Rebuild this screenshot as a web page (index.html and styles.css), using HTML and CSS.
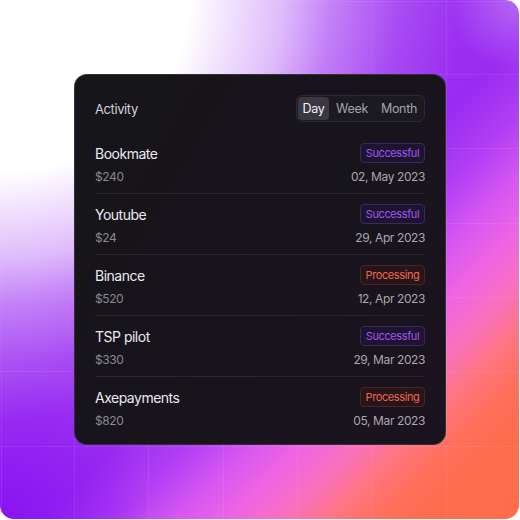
FILE: index.html
```html
<!DOCTYPE html>
<html>
<head>
<meta charset="utf-8">
<link rel="stylesheet" href="styles.css">
</head>
<body>
<div class="stage">
  <div class="grid"></div>
  <div class="card">
    <div class="header">
      <span class="title">Activity</span>
      <div class="seg">
        <span class="seg-item day active">Day</span>
        <span class="seg-item week">Week</span>
        <span class="seg-item month">Month</span>
      </div>
    </div>
    <div class="list">
      <div class="row">
        <div class="line1"><span class="name">Bookmate</span><span class="badge ok">Successful</span></div>
        <div class="line2"><span class="amount">$240</span><span class="date">02, May 2023</span></div>
      </div>
      <div class="row">
        <div class="line1"><span class="name">Youtube</span><span class="badge ok">Successful</span></div>
        <div class="line2"><span class="amount">$24</span><span class="date">29, Apr 2023</span></div>
      </div>
      <div class="row">
        <div class="line1"><span class="name">Binance</span><span class="badge proc">Processing</span></div>
        <div class="line2"><span class="amount">$520</span><span class="date">12, Apr 2023</span></div>
      </div>
      <div class="row">
        <div class="line1"><span class="name">TSP pilot</span><span class="badge ok">Successful</span></div>
        <div class="line2"><span class="amount">$330</span><span class="date">29, Mar 2023</span></div>
      </div>
      <div class="row last">
        <div class="line1"><span class="name">Axepayments</span><span class="badge proc">Processing</span></div>
        <div class="line2"><span class="amount">$820</span><span class="date">05, Mar 2023</span></div>
      </div>
    </div>
  </div>
</div>
</body>
</html>
```
FILE: styles.css
```css
* { box-sizing: border-box; }
html, body { margin: 0; padding: 0; background: #fff; }
body { font-family: Inter, "Noto Sans", sans-serif; }

.stage {
  position: relative;
  width: 519px;
  height: 519px;
  border-radius: 14px;
  overflow: hidden;
  padding: 74px 0 0 74px;
  background:
    radial-gradient(ellipse 460px 420px at 0% 0%, #ffffff 0%, #ffffff 41%, rgba(255,255,255,0.65) 61%, rgba(255,255,255,0.35) 72%, rgba(255,255,255,0.1) 87%, rgba(255,255,255,0) 100%),
    radial-gradient(circle at 100% 0%, rgba(205,150,250,0.55) 0%, rgba(205,150,250,0) 70px),
    radial-gradient(circle at 0% 100%, rgba(136,16,242,0.9) 0%, rgba(136,16,242,0) 150px),
    linear-gradient(135deg,
      #a848f4 0%, #a440f3 30%, #9c32f1 45%, #9a2cf1 54%, #b03ef3 61%,
      #d455f2 66.5%, #ee64e4 72%, #f870c0 77%, #ff7580 82%, #ff7060 86%,
      #ff6d4e 90%, #ff6c4a 100%);
}

.grid {
  position: absolute;
  inset: 0;
  background:
    repeating-linear-gradient(to right, rgba(255,255,255,0.07) 0 1px, transparent 1px 74.3px),
    repeating-linear-gradient(to bottom, rgba(255,255,255,0.07) 0 1px, transparent 1px 74.3px);
  background-position: 74px 74px;
  pointer-events: none;
}

.card {
  position: relative;
  width: 372px;
  border-radius: 13px;
  border: 1px solid rgba(255,255,255,0.12);
  background: linear-gradient(120deg, #161519 0%, #17141b 50%, #1b1320 100%);
  padding: 20px 20px 7px 20px;
  color: #e9e7ec;
}

.header {
  display: flex;
  align-items: center;
  justify-content: space-between;
  margin-bottom: 11px;
}
.title { font-size: 13px; color: #d2d0d6; letter-spacing: -0.4px; }

.seg {
  display: flex;
  align-items: center;
  padding: 1px;
  border: 1px solid #2c2932;
  background: #1c1a21;
  border-radius: 6px;
  height: 27px;
}
.seg-item {
  font-size: 12.5px;
  letter-spacing: -0.3px;
  color: #a5a2aa;
  height: 23px;
  line-height: 23px;
  border-radius: 4px;
  text-align: center;
}
.seg-item.day { width: 31px; }
.seg-item.week { width: 46px; }
.seg-item.month { width: 48px; }
.seg-item.active { background: #3a3741; color: #f2f1f4; }

.row {
  padding: 10px 0 9px;
  border-bottom: 1px solid #29262e;
}
.row.last { border-bottom: none; }
.line1, .line2 {
  display: flex;
  align-items: center;
  justify-content: space-between;
}
.line1 { height: 20px; }
.line2 { height: 16px; margin-top: 5px; }

.name { font-size: 14px; color: #ebe9ee; letter-spacing: -0.5px; }
.amount { font-size: 12px; color: #8b8890; letter-spacing: -0.4px; }
.date { font-size: 12px; color: #aaa7af; letter-spacing: -0.4px; }

.badge {
  font-size: 11px;
  letter-spacing: -0.4px;
  height: 20px;
  line-height: 18px;
  width: 65px;
  text-align: center;
  border-radius: 4px;
  border: 1px solid;
}
.badge.ok { color: #a552f2; border-color: #3b2860; background: #1d1530; }
.badge.proc { color: #f0654d; border-color: #4a2526; background: #27151a; }
```
